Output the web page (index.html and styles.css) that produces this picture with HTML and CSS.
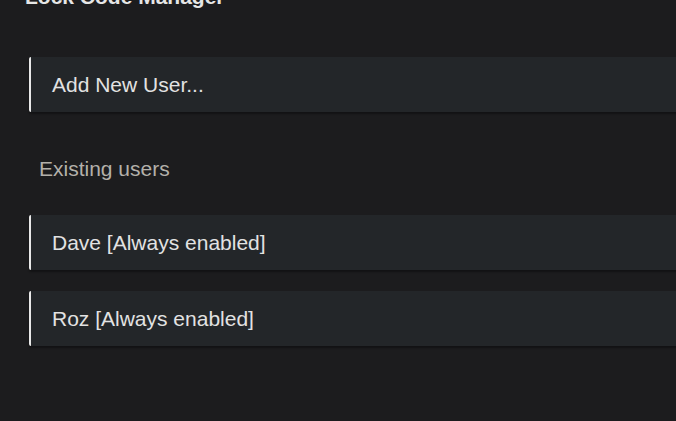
FILE: index.html
```html
<!DOCTYPE html>
<html lang="en">
<head>
<meta charset="utf-8">
<title>Lock Code Manager</title>
<link rel="stylesheet" href="styles.css">
</head>
<body>
<main class="page">
  <h1 class="title">Lock Code Manager</h1>
  <div class="card card-add">Add New User...</div>
  <h2 class="section-label">Existing users</h2>
  <div class="user-list">
    <div class="card">Dave [Always enabled]</div>
    <div class="card">Roz [Always enabled]</div>
  </div>
</main>
</body>
</html>
```

FILE: styles.css
```css
html, body {
  margin: 0;
  padding: 0;
  height: 100%;
  background: #1c1c1e;
  overflow: hidden;
}

.page {
  padding-left: 29px;
  font-family: "Liberation Sans", Arial, sans-serif;
  font-size: 21px;
  color: #e2e2e2;
}

.title {
  margin: -15px 0 0 -4px;
  font-size: 21px;
  line-height: 24px;
  font-weight: bold;
  color: #e6e6e6;
}

.card {
  box-sizing: border-box;
  height: 55px;
  margin-right: -40px;
  display: flex;
  align-items: center;
  padding-left: 21px;
  background: #232629;
  border-left: 2px solid #e8e8e8;
  border-radius: 2px 0 0 2px;
  box-shadow: 0 2px 2px rgba(0, 0, 0, 0.35);
  line-height: 24px;
}

.card-add {
  margin-top: 48px;
}

.section-label {
  margin: 45px 0 0 10px;
  font-size: 21px;
  line-height: 24px;
  font-weight: normal;
  color: #b3b0aa;
}

.user-list {
  margin-top: 34px;
  display: flex;
  flex-direction: column;
  gap: 21px;
}
```
